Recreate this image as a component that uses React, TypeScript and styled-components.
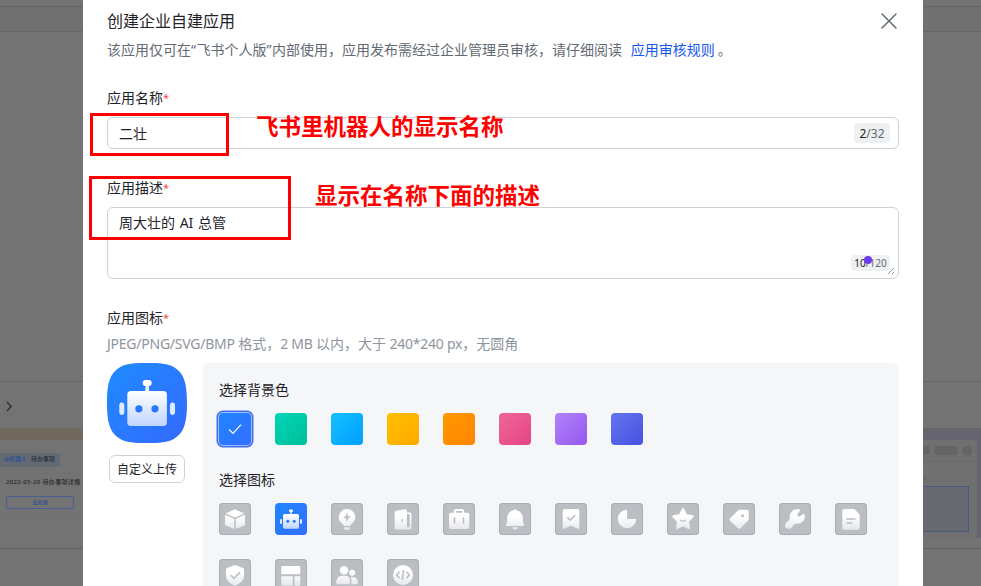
import React from 'react';
import styled, { createGlobalStyle } from 'styled-components';

const GlobalStyle = createGlobalStyle`
  * { box-sizing: border-box; }
  html, body { margin: 0; padding: 0; overflow: hidden; background: #737373; }
  body {
    font-family: "Noto Sans", "Noto Sans CJK SC", sans-serif;
    font-size: 14px;
    color: #1f2329;
  }
`;

const Page = styled.div`
  display: grid;
  grid-template-columns: 83px 840px 58px;
  width: 981px;
  height: 586px;
  overflow: hidden;
  background: #737373;
`;

/* ---------- dimmed page behind the dialog ---------- */

const Side = styled.aside`
  display: grid;
  grid-template-rows: 6px 26px 349px 168px 1fr;
  min-width: 0;
  overflow: hidden;
`;

const Band = styled.div<{ $tone?: string; $line?: boolean }>`
  background: ${(p) => p.$tone || '#737373'};
  border-top: ${(p) => (p.$line ? '1px solid #656666' : 'none')};
  border-bottom: ${(p) => (p.$tone ? '1px solid #656666' : 'none')};
  overflow: hidden;
`;

const Preview = styled(Band)`
  display: flex;
  flex-direction: column;
  border-bottom: 1px solid #606161;
`;

const ArrowRow = styled.div`
  height: 46px;
  padding: 17px 0 0 5px;
  line-height: 0;
`;

const Strip = styled.div`
  flex: none;
  height: 12px;
  background: #71695e;
`;

const Mention = styled.div`
  width: 60px;
  height: 14px;
  margin-top: 13px;
  padding-left: 4px;
  border-radius: 0 1px 1px 0;
  background: #626a76;
  color: #2b2d30;
  font-size: 6px;
  font-weight: 500;
  line-height: 13px;
  white-space: nowrap;
  display: flex;
  gap: 4px;
  flex: none;
`;

const MentionName = styled.span`
  color: #2b4a90;
  width: 23px;
  letter-spacing: -0.1px;
`;

const TaskCard = styled.div`
  flex: none;
  height: 42px;
  margin-top: 6px;
  padding-left: 6px;
  border-top: 1px solid #707070;
  border-bottom: 1px solid #6f6f6f;
  font-size: 6px;
  font-weight: 500;
  color: #27282a;
  white-space: nowrap;
`;

const TaskTitle = styled.div`
  height: 22px;
  line-height: 17px;
  letter-spacing: 0.33px;
`;

const TaskButton = styled.div`
  width: 68px;
  height: 13px;
  border: 1px solid #4a5f92;
  border-radius: 2px;
  color: #344f8c;
  font-size: 5px;
  line-height: 11px;
  text-align: center;
`;

const Lavender = styled.div`
  height: 110px;
  margin-top: 46px;
  padding: 12px 4px 0 0;
  background: #66646f;
`;

const MiniWindow = styled.div`
  height: 98px;
  background: #707070;
  border-top-right-radius: 3px;
`;

const MiniHeader = styled.div`
  display: flex;
  align-items: center;
  gap: 4px;
  height: 22px;
  border-bottom: 1px solid #6b6b6b;
`;

const Pill = styled.span<{ $w: number }>`
  width: ${(p) => p.$w}px;
  height: 9px;
  border-radius: ${(p) => (p.$w > 10 ? '3px' : '0 5px 5px 0')};
  background: #656565;
`;

const Dot = styled.span`
  width: 10px;
  height: 10px;
  border-radius: 50%;
  background: #656565;
`;

const MiniLine = styled.div`
  width: 4px;
  height: 3px;
  margin: 15px 0 6px;
  background: #696969;
`;

const BlueBox = styled.div`
  width: 46px;
  height: 46px;
  border: 1px solid #465a80;
  border-left: 0;
  border-radius: 0 1px 1px 0;
  background: #676a70;
`;

/* ---------- dialog ---------- */

const Dialog = styled.main`
  position: relative;
  height: 586px;
  padding: 9px 24px 0;
  background: #fff;
  overflow: hidden;
`;

const Header = styled.header`
  display: flex;
  justify-content: space-between;
  height: 29px;
`;

const Title = styled.h1`
  margin: 0;
  font-size: 16px;
  font-weight: 400;
  line-height: 24px;
`;

const Close = styled.button`
  width: 20px;
  height: 24px;
  padding: 0;
  border: 0;
  background: none;
`;

const Intro = styled.p`
  margin: 0;
  height: 49px;
  line-height: 24px;
  color: #646a73;
  white-space: nowrap;
`;

const Quote = styled.span`
  letter-spacing: 0.5px;
`;

const Link = styled.a`
  margin: 0 3px 0 5px;
  color: #1456f0;
`;

const Label = styled.label`
  display: flex;
  height: 30px;
  line-height: 22px;
`;

const Star = styled.span`
  color: #f54a45;
  font-size: 11px;
  line-height: 22px;
`;

const TextField = styled.div<{ $tall?: boolean }>`
  position: relative;
  display: flex;
  justify-content: space-between;
  height: ${(p) => (p.$tall ? 72 : 32)}px;
  margin-bottom: 28px;
  padding: ${(p) => (p.$tall ? '4px 8px 7px 11px' : '5px 8px 5px 11px')};
  border: 1px solid #d0d3d6;
  border-radius: 6px;
  line-height: 22px;
  word-spacing: 1px;
`;

const Counter = styled.span<{ $small?: boolean }>`
  align-self: flex-end;
  width: ${(p) => (p.$small ? 39 : 36)}px;
  height: ${(p) => (p.$small ? 16 : 20)}px;
  border-radius: 4px;
  background: #eff0f1;
  color: #646a73;
  font-size: ${(p) => (p.$small ? 10 : 12)}px;
  line-height: ${(p) => (p.$small ? 17 : 21)}px;
  text-align: center;
`;

const Count = styled.span`
  color: #1f2329;
`;

const Grip = styled.svg`
  position: absolute;
  right: 3px;
  bottom: 3px;
`;

const CursorDot = styled.i`
  position: absolute;
  right: 26px;
  bottom: 14px;
  width: 8px;
  height: 8px;
  border-radius: 50%;
  background: #6a3df0;
`;

const Hint = styled.p`
  margin: -4px 0 0;
  height: 30px;
  line-height: 22px;
  color: #8f959e;
  white-space: nowrap;
`;

const Latin = styled.span`
  letter-spacing: -0.24px;
`;

const IconArea = styled.section`
  display: flex;
  gap: 16px;
`;

const Uploader = styled.div`
  display: flex;
  flex-direction: column;
  align-items: center;
  gap: 12px;
  width: 80px;
`;

const UploadButton = styled.button`
  width: 76px;
  height: 28px;
  padding: 2px 0 0;
  border: 1px solid #d0d3d6;
  border-radius: 6px;
  background: #fff;
  color: #1f2329;
  font: inherit;
  font-size: 12px;
  line-height: 24px;
`;

const Panel = styled.div`
  width: 696px;
  height: 300px;
  padding: 16px;
  border-radius: 6px;
  background: #f5f6f7;
`;

const PanelTitle = styled.h2`
  height: 22px;
  margin: 0 0 12px;
  font-size: 14px;
  font-weight: 400;
  line-height: 22px;
`;

const Tiles = styled.div<{ $after?: number }>`
  display: grid;
  grid-template-columns: repeat(12, 32px);
  gap: 24px;
  margin-bottom: ${(p) => p.$after || 0}px;
`;

const Swatch = styled.div<{ $from: string; $to: string; $on?: boolean }>`
  display: grid;
  place-items: center;
  height: 32px;
  border-radius: 4px;
  background: linear-gradient(135deg, ${(p) => p.$from}, ${(p) => p.$to});
  box-shadow: ${(p) =>
    p.$on ? '0 0 0 1px #9fbafb, 0 0 0 2.5px #426ff0' : 'none'};
`;

const Tile = styled.div<{ $on?: boolean }>`
  height: 32px;
  border-radius: 4px;
  background: ${(p) => (p.$on ? 'linear-gradient(135deg, #1f87ff, #336dff)' : '#bbbfc4')};
  box-shadow: ${(p) => (p.$on ? 'none' : 'inset 0 0 0 1px #a9adb3')};
  --hole: #bbbfc4;
  line-height: 0;
`;

const Frame = styled.div<{ $x: number; $y: number; $w: number; $h: number }>`
  position: absolute;
  left: ${(p) => p.$x}px;
  top: ${(p) => p.$y}px;
  width: ${(p) => p.$w}px;
  height: ${(p) => p.$h}px;
  border: 3px solid #fe0000;
`;

const Note = styled.div<{ $x: number; $y: number }>`
  position: absolute;
  left: ${(p) => p.$x}px;
  top: ${(p) => p.$y}px;
  color: #fe0000;
  font-family: "Noto Sans CJK SC", sans-serif;
  font-size: 22.5px;
  font-weight: 700;
  line-height: 30px;
  white-space: nowrap;
`;

const hole = 'var(--hole)';

const glyphs: Record<string, React.ReactNode> = {
  cube: (
    <>
      <path d="M15.4 6.6q.6-.3 1.2 0l8.2 3.6q.5.3 0 .6l-8.2 3.5q-.6.3-1.2 0l-8.2-3.5q-.5-.3 0-.6z" />
      <path d="M6 12.4q0-.6.6-.4l8 3.4q.6.3.6.9v9q0 .7-.6.4l-8-3.3q-.6-.3-.6-.9z" />
      <path d="M26 12.4q0-.6-.6-.4l-8 3.4q-.6.3-.6.9v9q0 .7.6.4l8-3.3q.6-.3.6-.9z" />
    </>
  ),
  bulb: (
    <>
      <path d="M16 6a8.3 8.3 0 0 1 8.3 8.3c0 3.7-2.6 5.6-4.4 7.5-.6.6-.6 1.2-1.2 1.2h-5.4c-.6 0-.6-.6-1.2-1.2-1.8-1.9-4.4-3.8-4.4-7.5A8.3 8.3 0 0 1 16 6z" />
      <path d="M13 24.3h6v1q0 1.5-1.5 1.5h-3q-1.5 0-1.5-1.5z" />
      <path d="M17 9.5l-4.5 5.7h2.8l-.4 3.6 4.6-5.5h-2.8z" fill={hole} />
    </>
  ),
  door: (
    <>
      <path d="M18 9.5h5q1.4 0 1.4 1.4v13.6q0 2-2 2H18z" />
      <path d="M19.8 11h1.9q1 0 1 1v12.3h-2.9z" fill={hole} />
      <path d="M9.5 7.8l8.4-1.6q1.9-.3 1.9 1.6v18.8H9.2q-1.5 0-1.5-1.5V9.8q0-1.6 1.8-2z" />
      <rect x="14.4" y="16" width="1.4" height="3.4" rx=".7" fill={hole} />
    </>
  ),
  briefcase: (
    <>
      <path d="M11.9 10V8q0-1 1-1h6.2q1 0 1 1v2" fill="none" stroke="url(#whiteFade)" strokeWidth="2" />
      <rect x="6" y="9.7" width="20.3" height="16.3" rx="2" />
      <path d="M11.5 15v5M20.5 15v5" stroke={hole} strokeWidth="1.6" strokeLinecap="round" />
    </>
  ),
  bell: (
    <>
      <path d="M16 6.3q1 0 1.4 1c4.3.7 6.5 4.3 6.5 8.3v4l1 1.3q.6 2.1-.8 2.1H7.9q-1.4 0-.8-2.1l1-1.3v-4c0-4 2.2-7.6 6.5-8.3q.4-1 1.4-1z" />
      <path d="M13 24.3h6.2q-.4 2.2-3.1 2.2T13 24.3z" />
    </>
  ),
  bookmark: (
    <>
      <path d="M9.7 6h12.6q2 0 2 2v17.5q0 .9-.8.5L16 22.8 8.5 26q-.8.4-.8-.5V8q0-2 2-2z" />
      <path d="M12.5 14.4l2.7 2.7 5-4.9" fill="none" stroke={hole} strokeWidth="1.6" />
    </>
  ),
  pie: <path d="M15.2 6.8q.9 0 .9.9V16h8.4q.8 0 .7.9A9.2 9.2 0 1 1 15.2 6.8z" />,
  star: (
    <>
      <path
        d="M16 6.3l2.900 6 6.700 1.200-4.800 4.700 1 6.800-5.800-3-5.800 3 1-6.800-4.800-4.700 6.700-1.200z"
        stroke="url(#whiteFade)"
        strokeWidth="2.4"
        strokeLinejoin="round"
      />
      <path d="M13.4 17.2q2.6 2 5.2 0" fill="none" stroke={hole} strokeWidth="1.3" strokeLinecap="round" />
    </>
  ),
  tag: (
    <>
      <path d="M16.4 6.8h7q2.3 0 2.3 2.3v7q0 .9-.6 1.5l-7.6 7.6q-1.3 1.3-2.6 0l-8-7.4q-1.1-1.2 0-2.4l8-8q.6-.6 1.5-.6z" />
      <circle cx="19.6" cy="12.7" r="1.5" fill={hole} />
    </>
  ),
  wrench: (
    <path d="M20.8 6.6q.9.4.2 1.2l-2.4 3q-.6 1.2.3 2.1t2.2.3l3-2.3q1-.7 1.4.4c1.600 5.200-2.600 10-7.900 9.400-1.800-.2-2.600.7-3.400 2-1.600 2.800-4.800 4.200-7 2.400-2.300-2.200-.7-5.500 2-7 1.500-.9 1.700-1.800 1.500-3.500C10.200 9.400 15 4.800 20.800 6.600z" />
  ),
  doc: (
    <>
      <path d="M9.3 6h9.2q.8 0 1.4.6l4.200 4.500q.6.600.6 1.400v12.200q0 2-2 2H9.300q-2 0-2-2V8q0-2 2-2z" />
      <path d="M12 16h8M12 20h5" stroke={hole} strokeWidth="1.5" strokeLinecap="round" />
    </>
  ),
  shield: (
    <>
      <path d="M15.3 6.3q.7-.3 1.4 0l7.3 2.6q1 .4 1 1.4v6.4c0 4.800-4 7.700-8.300 9.700q-.7.300-1.400 0C11 24.400 7 21.500 7 16.700v-6.400q0-1 1-1.400z" />
      <path d="M11.8 16.2l3.2 3.2 5.8-6" fill="none" stroke={hole} strokeWidth="1.6" />
    </>
  ),
  layout: (
    <>
      <path d="M7.3 7h17q1 0 1 1v7.300h-19V8q0-1 1-1z" />
      <path d="M6.3 17.2h11.500v9.500H7.300q-1 0-1-1z" />
      <path d="M19.5 17.2h5.800v8.500q0 1-1 1h-4.800z" />
    </>
  ),
  people: (
    <>
      <circle cx="21.2" cy="13.8" r="3" />
      <path d="M19.4 18.2c4-1 7.600 1.500 7.600 5.300q0 1.700-1.500 1.700h-5.300c.6-2.700.5-5-.8-7z" />
      <circle cx="13" cy="11.2" r="4.2" />
      <path d="M10.5 16.8h4.500c3 0 4.200 3.400 4.200 6.400q0 2-2 2H7.200q-2 0-2-2c0-3 2.300-6.400 5.300-6.400z" />
    </>
  ),
  code: (
    <>
      <circle cx="16" cy="16" r="10" />
      <path d="M12.6 12.8L9.7 16l2.900 3.200M19.400 12.800l2.900 3.200-2.900 3.200M16.600 11l-1.200 10" fill="none" stroke={hole} strokeWidth="1.6" />
    </>
  ),
  robot: (
    <>
      <path d="M16 8.5v3.5" stroke="#fff" strokeWidth="1.4" />
      <rect x="14" y="6.5" width="4" height="2.6" rx="1.3" fill="#fff" />
      <rect x="8" y="11" width="16" height="14.7" rx="1.6" fill="url(#blueFade)" />
      <rect x="5" y="16" width="2" height="5" rx="1" fill="#dfe9ff" />
      <rect x="25" y="16" width="2" height="5" rx="1" fill="#dfe9ff" />
      <circle cx="12.8" cy="18.3" r="1.5" fill="#2878ff" />
      <circle cx="19.2" cy="18.3" r="1.5" fill="#2878ff" />
    </>
  ),
};

const order = [
  'cube', 'robot', 'bulb', 'door', 'briefcase', 'bell', 'bookmark', 'pie',
  'star', 'tag', 'wrench', 'doc', 'shield', 'layout', 'people', 'code',
];

const colors = [
  ['#1f87ff', '#336dff'],
  ['#00d6b9', '#00be96'],
  ['#14c0ff', '#009fff'],
  ['#ffbf00', '#ffaa00'],
  ['#ff9900', '#ff8500'],
  ['#ee6896', '#e64386'],
  ['#b083fb', '#9558ee'],
  ['#6375ee', '#4850e0'],
];

const Gradients = () => (
  <svg width="0" height="0" aria-hidden="true" display="block">
    <defs>
      <linearGradient id="whiteFade" gradientUnits="userSpaceOnUse" x1="0" y1="6" x2="0" y2="27">
        <stop offset=".35" stopColor="#fff" />
        <stop offset="1" stopColor="#e5e6e9" />
      </linearGradient>
      <linearGradient id="blueFade" x1="0" y1="0" x2="0" y2="1">
        <stop offset="0" stopColor="#fff" />
        <stop offset="1" stopColor="#bfd5ff" />
      </linearGradient>
      <linearGradient id="appBlue" x1="0" y1="0" x2="1" y2="1">
        <stop offset="0" stopColor="#1f8cff" />
        <stop offset="1" stopColor="#3369ff" />
      </linearGradient>
    </defs>
  </svg>
);

const AppLogo = () => (
  <svg width="80" height="80" viewBox="0 0 80 80">
    <path d="M40 0C52 0 61 .3 67.500 4.500 77 10.500 80 20 80 40S77 69.500 67.500 75.500C61 79.700 52 80 40 80S19 79.700 12.500 75.500C3 69.500 0 60 0 40S3 10.500 12.500 4.500C19 .3 28 0 40 0z" fill="url(#appBlue)" />
    <path d="M38.700 22h3l.4 5.500 1.200 1.500h-6.500l1.400-1.500z" fill="#f4f8ff" />
    <rect x="35.7" y="17" width="9" height="6" rx="3" fill="#fff" />
    <rect x="20.3" y="28" width="39.6" height="35" rx="3.5" fill="url(#blueFade)" />
    <rect x="12.3" y="39.6" width="5" height="12.4" rx="2.4" fill="#dfeaff" />
    <rect x="63" y="39.6" width="5" height="12.4" rx="2.4" fill="#dfeaff" />
    <circle cx="31.9" cy="45.8" r="3.6" fill="#2878ff" />
    <circle cx="48" cy="45.8" r="3.6" fill="#2878ff" />
  </svg>
);

export default function App() {
  return (
    <>
      <GlobalStyle />
      <Page>
        <Side>
          <Band />
          <Band $tone="#707070" $line />
          <Band />
          <Preview $line>
            <ArrowRow>
              <svg width="9" height="14" viewBox="0 0 9 14">
                <path d="M2 3l4 4.500L2 12" fill="none" stroke="#33363a" strokeWidth="1.6" />
              </svg>
            </ArrowRow>
            <Strip />
            <Mention>
              <MentionName>@机器人</MentionName>
              <span>待办事项</span>
            </Mention>
            <TaskCard>
              <TaskTitle>2022-05-20 待办事项详情</TaskTitle>
              <TaskButton>去处理</TaskButton>
            </TaskCard>
          </Preview>
          <Band />
        </Side>

        <Dialog>
          <Gradients />
          <Header>
            <Title>创建企业自建应用</Title>
            <Close aria-label="关闭">
              <svg width="20" height="24" viewBox="0 0 20 24">
                <path d="M3 5l14 14M17 5L3 19" stroke="#646a73" strokeWidth="1.5" strokeLinecap="round" />
              </svg>
            </Close>
          </Header>
          <Intro>
            该应用仅可在<Quote>“</Quote>飞书个人版<Quote>”</Quote>内部使用，应用发布需经过企业管理员审核，请仔细阅读{' '}
            <Link>应用审核规则</Link>。
          </Intro>

          <Label>应用名称<Star>*</Star></Label>
          <TextField>
            <span>二壮</span>
            <Counter><Count>2</Count>/32</Counter>
          </TextField>

          <Label>应用描述<Star>*</Star></Label>
          <TextField $tall>
            <span>周大壮的 AI 总管</span>
            <Counter $small><Count>10</Count>/120</Counter>
            <CursorDot />
            <Grip width="8" height="8" viewBox="0 0 8 8">
              <path d="M1 7l6-6M5 7l2-2" stroke="#8f959e" strokeWidth=".9" />
            </Grip>
          </TextField>

          <Label>应用图标<Star>*</Star></Label>
          <Hint>
            <Latin>JPEG/PNG/SVG/BMP </Latin>格式，<Latin>2 MB </Latin>以内，大于
            <Latin> 240*240 px</Latin>，无圆角
          </Hint>
          <IconArea>
            <Uploader>
              <AppLogo />
              <UploadButton>自定义上传</UploadButton>
            </Uploader>
            <Panel>
              <PanelTitle>选择背景色</PanelTitle>
              <Tiles $after={24}>
                {colors.map(([from, to], i) => (
                  <Swatch key={from} $from={from} $to={to} $on={i === 0}>
                    {i === 0 && (
                      <svg width="16" height="16" viewBox="0 0 16 16">
                        <path d="M2 8.3l4 4 8-8.6" fill="none" stroke="#fff" strokeWidth="1.2" />
                      </svg>
                    )}
                  </Swatch>
                ))}
              </Tiles>
              <PanelTitle>选择图标</PanelTitle>
              <Tiles>
                {order.map((name) => (
                  <Tile key={name} $on={name === 'robot'}>
                    <svg width="32" height="32" viewBox="0 0 32 32" fill="url(#whiteFade)">
                      {glyphs[name]}
                    </svg>
                  </Tile>
                ))}
              </Tiles>
            </Panel>
          </IconArea>

          <Frame $x={7} $y={113} $w={139} $h={43} />
          <Note $x={173} $y={110}>飞书里机器人的显示名称</Note>
          <Frame $x={6} $y={176} $w={202} $h={64} />
          <Note $x={232} $y={179}>显示在名称下面的描述</Note>
        </Dialog>

        <Side>
          <Band />
          <Band $tone="#707070" $line />
          <Band />
          <Preview $line>
            <Lavender>
              <MiniWindow>
                <MiniHeader>
                  <Pill $w={7} />
                  <Pill $w={24} />
                  <Dot />
                </MiniHeader>
                <MiniLine />
                <BlueBox />
              </MiniWindow>
            </Lavender>
          </Preview>
          <Band />
        </Side>
      </Page>
    </>
  );
}
